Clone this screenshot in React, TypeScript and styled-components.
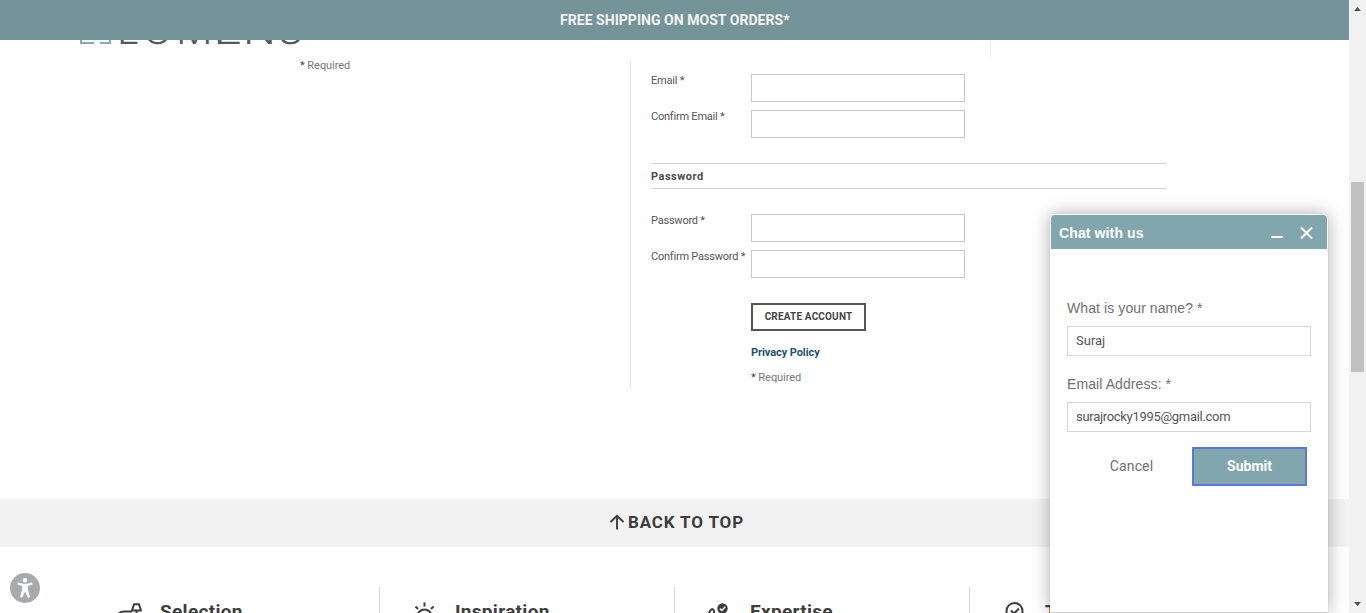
import React from "react";
import styled, { createGlobalStyle } from "styled-components";

const Global = createGlobalStyle`
  * { box-sizing: border-box; }
  body { margin: 0; overflow: hidden; background: #fff; }
  button, input { font: inherit; color: inherit; margin: 0; }
`;
const sans = `Roboto, "Liberation Sans", sans-serif`;
const Page = styled.div`
  position: relative; display: flex; height: 613px; overflow: hidden;
  font-family: ${sans}; font-size: 11px; color: #555;
`;
const Main = styled.main`flex: 1; min-width: 0; display: flex; flex-direction: column; overflow: hidden;`;
const Banner = styled.div`
  flex: none; height: 40px; background: #759499; color: #f2f2f2; padding-left: 560px;
  font: 700 14px/40px ${sans};
`;
const BannerText = styled.span`letter-spacing: 0.04px;`;
const HeaderStrip = styled.header`
  flex: none; height: 21px; overflow: hidden; display: flex; align-items: flex-end; padding: 0 0 17px 80px;
`;
const LogoMark = styled.svg`flex: none; width: 33px; height: 30px; display: block;`;
const LogoLetters = styled.div`
  display: flex; margin-left: 4.4px; height: 30px; color: #58585a;
  font: 300 36px/34px Inter, sans-serif;
`;
const Letter = styled.span<{ $w: number; $x: number }>`
  display: block; width: ${p => p.$w}px; transform-origin: 0 50%; transform: scaleX(${p => p.$x});
`;
const HeaderRule = styled.i`width: 1px; height: 34px; background: #ececec; margin: 0 0 -13px 689px;`;
const Account = styled.section`flex: none; height: 438px; display: flex; align-items: flex-start;`;
const Login = styled.div`width: 630px; padding: 0 0 0 300px; line-height: 9px;`;
const Required = styled.span`letter-spacing: -0.05px; color: #777; b { color: #444; font-weight: 400; }`;
const Register = styled.form`width: 536px; height: 328px; border-left: 1px solid #e5e5e5; padding: 13px 0 0 20px;`;
const Field = styled.label`display: flex; height: 36px; align-items: flex-start;`;
const FieldName = styled.span`width: 100px; line-height: 13px; white-space: nowrap; letter-spacing: -.22px;`;
const Input = styled.input`width: 214px; height: 28px; border: 1px solid #c8c8c8; background: #fff; padding: 0 8px; outline: 0;`;
const Heading = styled.h2`
  margin: 17px 0 25px; height: 26px; border: solid #d3d3d3; border-width: 1px 0;
  font: 700 11px/25px ${sans}; letter-spacing: .5px; color: #4b4b4b;
`;
const Actions = styled.div`padding: 17px 0 0 100px; display: flex; flex-direction: column; align-items: flex-start;`;
const Create = styled.button`
  width: 115px; height: 28px; padding: 0; border: 2px solid #555; background: #fff; color: #444;
  font: 700 10px/22px ${sans}; white-space: nowrap; letter-spacing: .17px;
`;
const Privacy = styled.a`margin: 15px 0 11px; font-weight: 700; line-height: 14px; color: #235370; letter-spacing: -.08px;`;
const TopBar = styled.div`
  flex: none; height: 48px; background: #f2f2f2; color: #3d3d3d; padding-left: 609px;
  display: flex; align-items: center; gap: 3px; font: 700 17px/46px ${sans};
  svg { margin-top: -3px; }
`;
const TopText = styled.span`padding-bottom: 2px; letter-spacing: .85px;`;
const Benefits = styled.div`flex: none; display: flex; padding: 40px 0 0 85px;`;
const Benefit = styled.div`
  flex: none; width: 295px; height: 60px; border-right: 1px solid #d4d4d4; display: flex; padding: 13px 0 0 30px;
  font: 700 19px/24px ${sans}; color: #3d3d3d;
  svg { flex: none; margin-right: 15px; margin-top: 2px; }
`;
const BenefitName = styled.span`letter-spacing: .3px;`;
const Scroll = styled.aside`
  flex: none; width: 17px; background: #f1f1f1; display: flex; flex-direction: column; align-items: center;
`;
const Arrow = styled.svg`display: block; flex: none;`;
const Thumb = styled.div`width: 13px; height: 190px; margin: 165px 0 224px; background: #c1c1c1; flex: none;`;
const Access = styled.button`
  position: absolute; left: 10px; top: 573px; width: 30px; height: 30px; border: 0; border-radius: 50%; padding: 0; background: #a7a9ac;
  svg { display: block; }
`;
const Chat = styled.section`
  position: absolute; left: 1050px; top: 214px; width: 278px; height: 399px; background: #fff;
  border: 1px solid #fff; border-bottom-color: #ccc; border-radius: 5px 5px 0 0;
  box-shadow: 0 0 18px rgba(0,0,0,.32), 0 0 1px rgba(0,0,0,.2);
  font-family: "Liberation Sans", Arial, sans-serif;
`;
const ChatHead = styled.header`
  height: 34px; background: #81a6ad; border-radius: 4px 4px 0 0; color: #fff; display: flex; align-items: center;
  padding: 2px 14px 0 8px; font-size: 14px; font-weight: 700; letter-spacing: .12px;
  svg { display: block; }
`;
const ChatTitle = styled.span`flex: 1;`;
const ChatForm = styled.form`padding: 50px 16px 0; color: #707070;`;
const ChatLabel = styled.label`display: block; height: 27px; font-size: 14px; line-height: 18px; letter-spacing: .09px;`;
const ChatInput = styled.input`
  display: block; width: 244px; height: 30px; border: 1px solid #d6d6d6; padding: 0 8px 2px; outline: 0; color: #555;
  margin-bottom: 19px; font-family: ${sans}; font-size: 13px; background: #fff;
  &[type="email"] { letter-spacing: -.3px; }
`;
const ChatActions = styled.div`display: flex; margin-top: -4px; font: 14px ${sans};`;
const Cancel = styled.button`width: 125px; height: 39px; padding: 0 0 2px 4px; border: 0; background: none; letter-spacing: .12px;`;
const Submit = styled.button`
  width: 115px; height: 39px; border: 2px solid #5a78dc; background: #81a6ad; color: #fff; font-weight: 700; padding: 0 0 2px;
`;

function FormField({ name }: { name: string }) {
  return <Field><FieldName>{name} *</FieldName><Input /></Field>;
}

export default function App() {
  return (
    <Page>
      <Global />
      <Main>
        <Banner><BannerText>FREE SHIPPING ON MOST ORDERS*</BannerText></Banner>
        <HeaderStrip>
          <LogoMark viewBox="0 0 33 30" fill="none" stroke="#81adb5" strokeWidth="2">
            <path d="M13 1H1v28h13M20 1h10v28H20" />
          </LogoMark>
          <LogoLetters>
            <Letter $w={26} $x={1.1}>L</Letter><Letter $w={33} $x={1.1}>U</Letter><Letter $w={36.4} $x={1.13}>M</Letter>
            <Letter $w={30.6} $x={1.4}>E</Letter><Letter $w={34.7} $x={1.2}>N</Letter><Letter $w={23} $x={1.1}>S</Letter>
          </LogoLetters>
          <HeaderRule />
        </HeaderStrip>
        <Account>
          <Login><Required><b>*</b> Required</Required></Login>
          <Register>
            <FormField name="Email" />
            <FormField name="Confirm Email" />
            <Heading>Password</Heading>
            <FormField name="Password" />
            <FormField name="Confirm Password" />
            <Actions>
              <Create type="button">CREATE ACCOUNT</Create>
              <Privacy>Privacy Policy</Privacy>
              <Required><b>*</b> Required</Required>
            </Actions>
          </Register>
        </Account>
        <TopBar>
          <svg width="16" height="16" viewBox="0 0 16 16" fill="none" stroke="#3d3d3d" strokeWidth="1.9"><path d="M8 15.5V2M1.5 8 8 1.7 14.5 8" /></svg>
          <TopText>BACK TO TOP</TopText>
        </TopBar>
        <Benefits>
          <Benefit>
            <svg width="30" height="30" viewBox="0 0 30 30" fill="none" stroke="#3d3d3d" strokeWidth="2">
              <path d="M3 12.500c1-2 3-3 6-3h8M19 2.200h5l2 6.300h-9zM21.500 9v8" strokeLinejoin="round" />
            </svg>
            <BenefitName>Selection</BenefitName>
          </Benefit>
          <Benefit>
            <svg width="30" height="30" viewBox="0 0 30 30" fill="none" stroke="#3d3d3d" strokeWidth="2">
              <path d="M14.500 0.500v4M5.500 4.500l2.500 2.500M23.500 4.500l-2.500 2.500M7.500 14.500a7 7 0 0 1 14 0" />
            </svg>
            <BenefitName>Inspiration</BenefitName>
          </Benefit>
          <Benefit>
            <svg width="30" height="30" viewBox="0 0 30 30" fill="none" stroke="#3d3d3d" strokeWidth="2">
              <path d="M3.500 13c1.500-6 4.500-7.500 5.500-4v6" /><circle cx="17.500" cy="6.500" r="5.200" fill="#3d3d3d" stroke="none" /><path d="m14.800 6.500 2 2 3.500-3.700" stroke="#fff" strokeWidth="1.300" />
            </svg>
            <BenefitName>Expertise</BenefitName>
          </Benefit>
          <Benefit>
            <svg width="30" height="30" viewBox="0 0 30 30" fill="none" stroke="#3d3d3d" strokeWidth="2">
              <circle cx="14.500" cy="9" r="8" /><path d="m11 8.500 3 3 5-5" />
            </svg>
            <BenefitName>Trust</BenefitName>
          </Benefit>
        </Benefits>
      </Main>
      <Scroll>
        <Arrow width="17" height="17" viewBox="0 0 17 17"><path d="M5 11h7L8.500 7z" fill="#505050" /></Arrow>
        <Thumb />
        <Arrow width="17" height="17" viewBox="0 0 17 17"><path d="M5 6h7L8.500 10z" fill="#505050" /></Arrow>
      </Scroll>
      <Access aria-label="Accessibility">
        <svg width="30" height="30" viewBox="0 0 30 30" fill="#fff">
          <circle cx="15" cy="7.200" r="2.300" />
          <path d="m8 9.700 5 1.300h4l5-1.300.4 1.500-4.900 1.900.3 4 2 7-1.800.5L15.500 19h-1L12 24.600l-1.800-.5 2-7 .3-4-4.900-1.900z" stroke="#fff" strokeWidth=".4" />
        </svg>
      </Access>
      <Chat>
        <ChatHead>
          <ChatTitle>Chat with us</ChatTitle>
          <svg width="42" height="14" viewBox="0 0 42 14" fill="none" stroke="#fff" strokeWidth="2"><path d="M0 11h12M30 1.500l11 11M41 1.500l-11 11" /></svg>
        </ChatHead>
        <ChatForm>
          <ChatLabel>What is your name? *</ChatLabel>
          <ChatInput defaultValue="Suraj" />
          <ChatLabel>Email Address: *</ChatLabel>
          <ChatInput type="email" defaultValue="surajrocky1995@gmail.com" />
          <ChatActions><Cancel type="button">Cancel</Cancel><Submit type="button">Submit</Submit></ChatActions>
        </ChatForm>
      </Chat>
    </Page>
  );
}
